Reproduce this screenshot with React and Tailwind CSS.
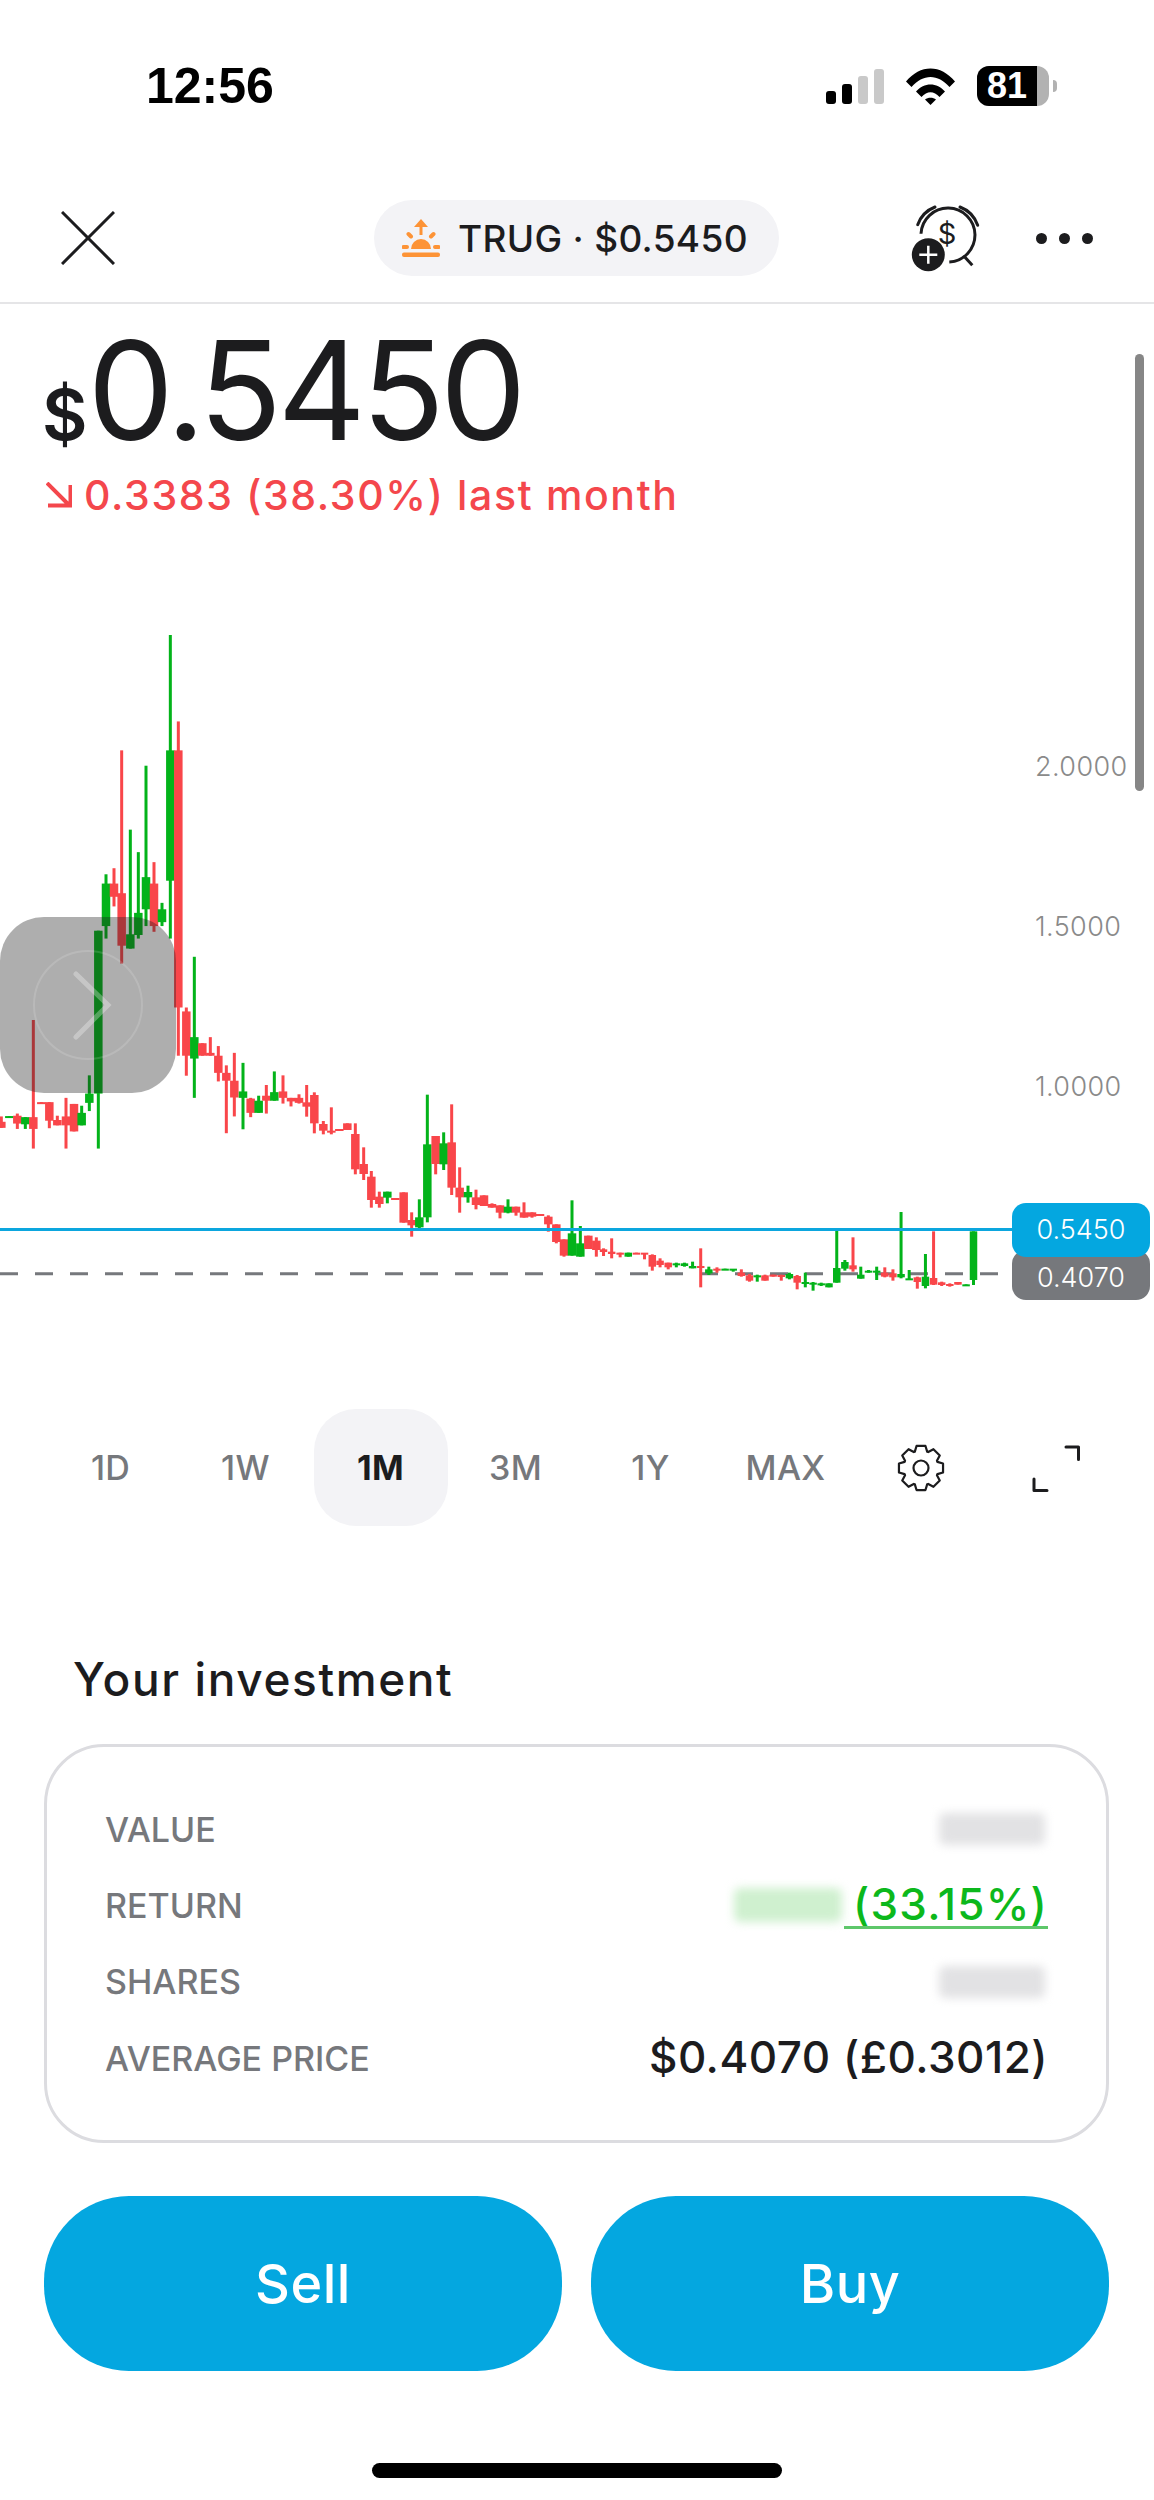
import React from 'react';

const G = '#03b31a';
const R = '#f9464a';

// [x, wickTop, wickBottom, bodyTop, bodyBottom, up?] measured off the picture, one list per chart stretch
const left = [
  [4, 1390, 1422, 1405, 1422, 0], [28, 1389, 1391, 1389, 1391, 1], [52, 1382, 1425, 1388, 1410, 0],
  [76, 1392, 1425, 1392, 1412, 1], [100, 1120, 1480, 1392, 1425, 0], [124, 1350, 1355, 1350, 1355, 0],
  [148, 1350, 1423, 1350, 1402, 0], [172, 1388, 1415, 1400, 1415, 0], [198, 1338, 1480, 1390, 1415, 0],
  [222, 1355, 1432, 1355, 1432, 0], [245, 1360, 1415, 1380, 1415, 1], [268, 1275, 1375, 1326, 1352, 1],
  [295, 870, 1480, 870, 1326, 1], [318, 712, 892, 738, 857, 1], [342, 695, 802, 738, 775, 0],
  [365, 365, 962, 765, 912, 0], [391, 587, 920, 880, 920, 1], [415, 650, 892, 820, 882, 1],
  [438, 408, 857, 720, 810, 1], [462, 678, 873, 738, 857, 0], [486, 792, 857, 810, 846, 1],
  [511, 42, 892, 365, 730, 1], [535, 284, 1220, 365, 1085, 0], [559, 1085, 1276, 1096, 1220, 0],
  [583, 943, 1338, 1168, 1228, 1], [607, 1185, 1220, 1185, 1220, 0], [631, 1168, 1220, 1212, 1220, 0],
  [655, 1193, 1292, 1220, 1268, 0], [679, 1247, 1437, 1268, 1290, 0], [703, 1212, 1390, 1290, 1337, 0],
  [729, 1240, 1426, 1320, 1338, 1], [752, 1338, 1392, 1340, 1380, 0], [776, 1332, 1380, 1346, 1380, 1],
  [799, 1302, 1382, 1332, 1346, 0], [823, 1264, 1346, 1322, 1346, 1], [849, 1275, 1354, 1320, 1338, 0],
  [873, 1338, 1362, 1338, 1348, 0], [897, 1328, 1354, 1338, 1352, 0],
];
const middle = [
  [20, 135, 230, 187, 200, 0], [43, 157, 280, 165, 250, 0], [70, 243, 283, 252, 272, 0],
  [94, 202, 283, 272, 278, 0], [118, 267, 272, 267, 272, 0], [142, 250, 270, 250, 270, 0],
  [166, 250, 403, 282, 388, 0], [191, 322, 420, 372, 402, 0], [214, 393, 503, 410, 480, 0],
  [238, 455, 503, 470, 492, 0], [262, 455, 490, 455, 473, 1], [286, 474, 477, 474, 477, 0],
  [311, 457, 548, 457, 548, 0], [335, 517, 590, 540, 556, 0], [358, 478, 565, 532, 562, 1],
  [382, 164, 547, 313, 532, 1], [407, 288, 403, 288, 372, 0], [431, 277, 390, 310, 373, 1],
  [455, 193, 465, 307, 443, 0], [479, 382, 518, 443, 472, 0], [504, 437, 488, 456, 472, 1],
  [528, 449, 508, 472, 495, 0], [552, 466, 498, 466, 498, 0], [576, 490, 503, 492, 503, 0],
  [600, 496, 535, 496, 518, 0], [624, 478, 520, 500, 518, 1], [648, 500, 527, 500, 518, 0],
  [672, 487, 533, 517, 533, 0], [696, 517, 533, 517, 530, 0], [720, 522, 527, 522, 527, 0],
  [745, 526, 575, 530, 553, 0], [769, 553, 610, 553, 606, 0], [792, 598, 650, 598, 647, 0],
  [816, 481, 647, 580, 647, 1], [841, 558, 650, 610, 650, 1], [865, 587, 627, 587, 627, 0],
  [889, 592, 650, 602, 630, 0],
];
const right = [
  [10, 295, 318, 298, 306, 0], [33, 265, 325, 305, 312, 0], [57, 308, 322, 308, 314, 0],
  [80, 308, 320, 308, 320, 1], [103, 308, 312, 308, 312, 0], [126, 310, 328, 308, 314, 0],
  [148, 313, 362, 315, 350, 0], [170, 325, 352, 332, 345, 0], [193, 338, 358, 338, 352, 0],
  [216, 338, 352, 340, 345, 1], [239, 338, 350, 340, 348, 1], [262, 335, 355, 348, 355, 1],
  [285, 295, 412, 348, 354, 0], [308, 350, 375, 358, 370, 1], [331, 352, 368, 356, 362, 0],
  [354, 356, 358, 356, 358, 1], [377, 358, 365, 356, 358, 1], [400, 358, 380, 368, 378, 0],
  [423, 372, 395, 376, 392, 0], [445, 374, 395, 376, 380, 1], [467, 374, 392, 376, 392, 0],
  [490, 374, 380, 374, 380, 0], [513, 374, 392, 375, 380, 0], [536, 368, 388, 372, 385, 1],
  [558, 375, 418, 378, 398, 0], [581, 368, 412, 396, 400, 1], [603, 396, 422, 398, 402, 1],
  [626, 398, 408, 400, 404, 1], [648, 400, 412, 400, 412, 1], [670, 234, 398, 354, 398, 1],
  [693, 330, 362, 336, 356, 1], [716, 262, 365, 346, 358, 0], [738, 350, 386, 374, 386, 1],
  [760, 360, 368, 362, 366, 1], [783, 350, 390, 362, 364, 1], [806, 352, 382, 368, 380, 0],
  [829, 358, 392, 370, 382, 0], [852, 186, 385, 372, 382, 1], [875, 360, 388, 385, 387, 1],
  [898, 380, 416, 382, 396, 0], [921, 312, 415, 380, 408, 1], [944, 244, 405, 384, 404, 0],
  [967, 395, 408, 397, 405, 0], [990, 400, 410, 402, 408, 0], [1013, 396, 404, 396, 404, 0],
  [1036, 403, 405, 403, 405, 1], [1057, 244, 405, 244, 390, 1],
];

const toPage = (list, ox, oy, sx, sy, wide = 8.5) =>
  list.map(([x, wt, wb, bt, bb, up]) => ({
    x: ox + x / sx, wt: oy + wt / sy, wb: oy + wb / sy, bt: oy + bt / sy, bb: oy + bb / sy, up, wide,
  }));

const candles = [
  ...toPage(left, 0, 620, 3, 2.8),
  ...toPage(middle, 300, 1040, 3, 3),
  ...toPage(right, 600, 1150, 2.83, 3, 7.5),
];

function Chart() {
  return (
    <svg viewBox="0 540 1012 800" width="1012" height="800" className="absolute left-0 top-0">
      <line x1="0" x2="1004" y1="1273.7" y2="1273.7" stroke="#76787c" strokeWidth="3" strokeDasharray="18 17" />
      {candles.map((c, i) => (
        <g key={i} fill={c.up ? G : R}>
          <rect x={c.x - 1.5} y={c.wt} width="3" height={c.wb - c.wt} />
          <rect x={c.x - c.wide / 2} y={c.bt} width={c.wide} height={Math.max(c.bb - c.bt, 2)} />
        </g>
      ))}
      <line x1="0" x2="1012" y1="1229.5" y2="1229.5" stroke="#0ca6de" strokeWidth="3" />
    </svg>
  );
}

function SunIcon() {
  return (
    <svg viewBox="0 0 38 38" className="w-[38px] h-[38px]" fill="#fd9336" stroke="none">
      <path d="M19 0l7 8h-5.5v8h-3V8H12z" />
      <path d="M9 30a10 10 0 0 1 20 0z" />
      <rect x="0" y="33.5" width="38" height="4.5" rx="2" />
      <g stroke="#fd9336" strokeWidth="4" strokeLinecap="round">
        <path d="M6.5 15l2.5 2.5M31.5 15L29 17.5M1.5 28h3.5M33 28h3.5" />
      </g>
    </svg>
  );
}

function ClockIcon() {
  return (
    <svg viewBox="910 205 70 70" className="w-[70px] h-[70px]" fill="none" stroke="#1c1c1e" strokeWidth="3">
      <path d="M921 235.7A27 27 0 1 1 949.3 264" />
      <path d="M917.7 226.7A30 30 0 0 1 935 209M960 209A30 30 0 0 1 977.7 227.3" strokeLinecap="round" />
      <path d="M965 259.3l7.3 8" />
      <text x="947" y="246" textAnchor="middle" fontSize="29" fill="#1c1c1e" stroke="none">$</text>
      <circle cx="928.3" cy="256.7" r="16.5" fill="#1c1c1e" stroke="none" />
      <path d="M919.3 256.7h18M928.3 247.7v18" stroke="#fff" strokeWidth="2.5" />
    </svg>
  );
}

function Gear() {
  // 8 toothed cog, outline worked out from the angles
  const pts = [];
  for (let i = 0; i < 8; i++) {
    const a = (i * Math.PI) / 4 - Math.PI / 2;
    const at = (r, d) => [24 + r * Math.cos(a + d), 24 + r * Math.sin(a + d)];
    pts.push(at(17.5, -0.36), at(22.5, -0.2), at(22.5, 0.2), at(17.5, 0.36));
  }
  return (
    <svg viewBox="0 0 48 48" className="w-[48px] h-[48px]" fill="none" stroke="#1c1c1e" strokeWidth="2.2" strokeLinejoin="round">
      <path d={'M' + pts.map((p) => p.join(' ')).join('L') + 'Z'} />
      <circle cx="24" cy="24" r="7.5" />
    </svg>
  );
}

function Row({ label, children }) {
  return (
    <div className="h-[76.3px] flex items-center justify-between">
      <span className="text-[34px] font-medium text-[#76787c]">{label}</span>
      {children}
    </div>
  );
}

const Hidden = () => <div className="mr-[3px] w-[106px] h-[32px] rounded-md bg-[#e2e2e4] blur-[5px]" />;

export default function App() {
  const ranges = ['1D', '1W', '1M', '3M', '1Y', 'MAX'];

  return (
    <div className="relative w-[1154px] h-[2500px] overflow-hidden bg-white text-[#1c1c1e] [font-family:Inter,sans-serif]">
      {/* status bar */}
      <div className="h-[172px] flex items-center pl-[146px] pr-[97px]">
        <span className="text-[50px] font-bold text-black [font-family:'Liberation_Sans',sans-serif]">12:56</span>
        <div className="ml-auto flex items-center">
          <div className="flex items-end gap-[6px] h-[35px]">
            <div className="w-[10px] h-[13px] rounded-[3px] bg-black" />
            <div className="w-[10px] h-[20px] rounded-[3px] bg-black" />
            <div className="w-[10px] h-[28px] rounded-[3px] bg-[#c9c9c9]" />
            <div className="w-[10px] h-[35px] rounded-[3px] bg-[#c9c9c9]" />
          </div>
          <svg viewBox="0 0 49 37" className="w-[49px] h-[37px] ml-[22px]">
            <path d="M0 13.5C14 -4 35 -4 49 13.5L43.5 19C32 5.5 17 5.5 5.500 19z" />
            <path d="M10 23.500C18 14 31 14 39 23.500L33.500 29C28 22.500 21 22.500 15.500 29z" />
            <path d="M19 31.500C22 29 27 29 30 31.500L24.500 37z" />
          </svg>
          <div className="relative ml-[22px] w-[72px] h-[40px] rounded-[12px] overflow-hidden bg-[#b2b2b2]">
            <div className="w-[60px] h-full bg-black flex items-center justify-center">
              <span className="text-[36px] font-bold leading-none text-white [font-family:'Liberation_Sans',sans-serif]">81</span>
            </div>
          </div>
          <div className="ml-[4px] w-[4px] h-[12px] rounded-r-full bg-[#b2b2b2]" />
        </div>
      </div>

      {/* nav */}
      <div className="h-[132px] pt-[2px] border-b-2 border-[#e5e5e7] flex items-center pl-[61px]">
        <svg viewBox="0 0 54 54" className="w-[54px] h-[54px]" stroke="#1c1c1e" strokeWidth="3" fill="none">
          <path d="M1 1l52 52M53 1L1 53" />
        </svg>
        <div className="ml-[259px] w-[405px] h-[76px] rounded-[38px] bg-[#f3f3f6] flex items-center pl-[28px] gap-[18px]">
          <SunIcon />
          <span className="text-[37px] font-medium leading-none tracking-[0.3px] whitespace-nowrap">TRUG · $0.5450</span>
        </div>
        <div className="ml-[131px]">
          <ClockIcon />
        </div>
        <div className="ml-[56px] flex gap-[12px]">
          <div className="w-[11px] h-[11px] rounded-full bg-[#1c1c1e]" />
          <div className="w-[11px] h-[11px] rounded-full bg-[#1c1c1e]" />
          <div className="w-[11px] h-[11px] rounded-full bg-[#1c1c1e]" />
        </div>
      </div>

      {/* price */}
      <div className="h-[236px] pl-[42px] pt-[16px]">
        <div className="flex items-baseline h-[140px] leading-[140px]">
          <span className="text-[70px] font-semibold">$</span>
          <span className="text-[137px] tracking-[-4.6px]">0.5450</span>
        </div>
        <div className="mt-[10px] ml-[4px] flex items-center text-[41px] font-medium leading-[50px] tracking-[1.65px] text-[#f4474c]">
          <svg viewBox="0 0 26 26" className="w-[26px] h-[26px] mr-[12px]" fill="none" stroke="#f4474c" strokeWidth="4">
            <path d="M1 1l22 22M2 23.500h22.500V3" />
          </svg>
          <span className="whitespace-nowrap">0.3383 (38.30%) last month</span>
        </div>
      </div>

      {/* chart */}
      <div className="relative h-[800px]">
        <Chart />
        <span className="absolute left-[1035px] top-[212px] text-[27px] font-light leading-[30px] tracking-[0.4px] text-[#8a8a8a]">2.0000</span>
        <span className="absolute left-[1035px] top-[372px] text-[27px] font-light leading-[30px] tracking-[0.4px] text-[#8a8a8a]">1.5000</span>
        <span className="absolute left-[1035px] top-[532px] text-[27px] font-light leading-[30px] tracking-[0.4px] text-[#8a8a8a]">1.0000</span>
        <div className="absolute left-[1012px] top-[710px] w-[138px] h-[50px] rounded-[14px] bg-[#76787c] flex items-end justify-center pb-[7px]">
          <span className="text-[27px] font-light leading-[30px] text-white">0.4070</span>
        </div>
        <div className="absolute left-[1012px] top-[663px] w-[138px] h-[54px] rounded-[14px] bg-[#04a7e0] flex items-center justify-center">
          <span className="text-[27px] font-light leading-[30px] text-white">0.5450</span>
        </div>
        {/* slide handle over the chart */}
        <div className="absolute left-0 top-[377px] w-[176px] h-[176px] rounded-[44px] bg-[rgba(30,30,30,0.36)] flex items-center justify-center">
          <svg viewBox="0 0 110 110" className="w-[110px] h-[110px]" fill="none">
            <circle cx="55" cy="55" r="54" stroke="#fff" strokeOpacity="0.14" strokeWidth="2" />
            <path d="M43 24l32 31-32 32" stroke="#fff" strokeOpacity="0.3" strokeWidth="5" strokeLinecap="round" />
          </svg>
        </div>
      </div>

      {/* ranges */}
      <div className="mt-[69px] ml-[43px] w-[1080px] h-[117px] grid grid-cols-8 items-center justify-items-center text-[34px] font-medium tracking-[0.3px] text-[#76787c]">
        {ranges.map((r) => (
          <div
            key={r}
            className={
              r === '1M'
                ? 'w-[134px] h-[117px] rounded-[42px] bg-[#f3f3f6] flex items-center justify-center font-bold text-[#1c1c1e]'
                : 'flex items-center justify-center'
            }
          >
            {r}
          </div>
        ))}
        <Gear />
        <svg viewBox="0 0 48 48" className="w-[48px] h-[48px]" fill="none" stroke="#1c1c1e" strokeWidth="3" strokeLinecap="round" strokeLinejoin="round">
          <path d="M34 3h12.500v12.500M2 35v11.500h13" />
        </svg>
      </div>

      {/* investment */}
      <h2 className="mt-[126px] ml-[73px] text-[46px] font-medium leading-[54px] tracking-[1.6px]">Your investment</h2>
      <div className="mt-[38px] ml-[44px] w-[1065px] h-[399px] border-[3px] border-[#dcdce0] rounded-[60px] px-[58px] pt-[44px]">
        <Row label="VALUE">
          <Hidden />
        </Row>
        <Row label="RETURN">
          <div className="flex items-center">
            <div className="w-[108px] h-[34px] rounded-md bg-[#cff0cf] blur-[5px]" />
            <span className="ml-[2px] pl-[9px] text-[44px] font-medium leading-[44px] tracking-[1.2px] text-[#0cb81c] border-b-[3px] border-[#5ec76a]">
              (33.15%)
            </span>
          </div>
        </Row>
        <Row label="SHARES">
          <Hidden />
        </Row>
        <Row label="AVERAGE PRICE">
          <span className="text-[44px] font-medium tracking-[0.5px] -translate-y-px">$0.4070 (£0.3012)</span>
        </Row>
      </div>

      {/* actions */}
      <div className="mt-[53px] ml-[44px] w-[1065px] h-[175px] flex gap-[29px]">
        <button className="flex-1 rounded-[85px] bg-[#04a7e0] text-white text-[54px] font-medium tracking-[0.5px]">Sell</button>
        <button className="flex-1 rounded-[85px] bg-[#04a7e0] text-white text-[54px] font-medium tracking-[0.5px]">Buy</button>
      </div>

      {/* home indicator */}
      <div className="mt-[92px] mx-auto w-[410px] h-[15px] rounded-full bg-black" />

      {/* scrollbar */}
      <div className="absolute left-[1135px] top-[354px] w-[9px] h-[437px] rounded-full bg-[#868686]" />
    </div>
  );
}
